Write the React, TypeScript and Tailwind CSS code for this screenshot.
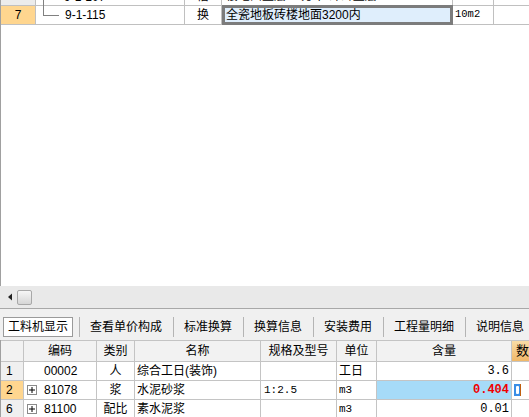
import React from "react";

const FONT = { fontFamily: '"Liberation Sans", "Noto Sans CJK SC", sans-serif' };
const MONO = { fontFamily: '"Liberation Mono", "Noto Sans CJK SC", monospace' };

const TABS = ["工料机显示", "查看单价构成", "标准换算", "换算信息", "安装费用", "工程量明细", "说明信息"];

function PlusBox() {
  return (
    <span className="w-[10px] h-[10px] border border-[#8a8a8a] bg-white flex items-center justify-center shrink-0">
      <svg width="8" height="8" viewBox="0 0 8 8">
        <path d="M1 4H7M4 1V7" stroke="#000" strokeWidth="1" />
      </svg>
    </span>
  );
}

function TopTable() {
  return (
    <div className="h-[286px] bg-white border-l border-[#a0a0a0] overflow-hidden">
      {/* partially scrolled-off row */}
      <div className="h-[5px] overflow-hidden flex items-end">
        <div className="flex h-[19px] w-full text-[12px] shrink-0">
          <div className="w-[35px] bg-[#ececec] border-r border-[#c0c0c0]" />
          <div className="w-[149px] border-r border-[#c0c0c0] relative">
            <div className="absolute left-[7px] top-0 bottom-0 border-l border-[#808080]" />
            <span className="absolute left-[28px] top-[2px]">9-1-107</span>
          </div>
          <div className="w-[37px] border-r border-[#c0c0c0] text-center pt-[1px]">借</div>
          <div className="w-[231px] border-r border-[#c0c0c0] pl-[4px] pt-[1px] whitespace-nowrap">楼地面垫层 土方平 碎砖垫层</div>
          <div className="w-[41px] border-r border-[#c0c0c0]" />
          <div className="flex-1" />
        </div>
      </div>
      {/* row 7 */}
      <div className="flex h-[20px] border-y border-[#c0c0c0] text-[12px]">
        <div className="w-[35px] bg-[#ffd68f] border-r border-[#c0c0c0] flex items-center justify-center">7</div>
        <div className="w-[149px] border-r border-[#c0c0c0] relative flex items-center">
          <div className="absolute left-[7px] top-[-6px] h-[16px] border-l border-[#808080]" />
          <div className="absolute left-[7px] top-[9px] w-[16px] border-t border-[#808080]" />
          <span className="pl-[29px]">9-1-115</span>
        </div>
        <div className="w-[37px] border-r border-[#c0c0c0] flex items-center justify-center">换</div>
        <div className="w-[231px] -my-[1px] h-[20px] border-[3px] border-[#7c7c7c] bg-[#dfeefc] flex items-center pl-[1px] whitespace-nowrap">
          全瓷地板砖楼地面3200内
        </div>
        <div className="w-[41px] border-r border-[#c0c0c0] flex items-center pl-[2px] text-[10.5px]" style={MONO}>
          10m2
        </div>
        <div className="flex-1" />
      </div>
    </div>
  );
}

function ScrollBar() {
  return (
    <div className="h-[23px] bg-[#e9e9e9] border-b border-[#a8a8a8] flex items-center pl-[7px] gap-[4px]">
      <svg width="6" height="8" viewBox="0 0 6 8">
        <path d="M1 4L5 0.5V7.5Z" fill="#222" />
      </svg>
      <div className="w-[15px] h-[15px] rounded-[2px] border border-[#a8a8a8] bg-gradient-to-b from-[#f6f6f6] to-[#d6d6d6]" />
    </div>
  );
}

function Tabs() {
  return (
    <div className="h-[31px] bg-[#f0f0f0] flex items-start pt-[8px] pl-[3px] text-[12px] whitespace-nowrap">
      {TABS.map((t, i) => (
        <React.Fragment key={t}>
          {i > 0 && (
            <div className={"w-px h-[20px] bg-[#b4b4b4] mr-[10px] shrink-0 " + (i === 1 ? "ml-[6px]" : "ml-[11px]")} />
          )}
          {i === 0 ? (
            <div className="h-[20px] border border-[#9a9a9a] bg-white px-[4px] flex items-center shrink-0">{t}</div>
          ) : (
            <div className="h-[20px] flex items-center shrink-0">{t}</div>
          )}
        </React.Fragment>
      ))}
    </div>
  );
}

const COLS = [23, 73, 38, 126, 76, 40, 135];

function Cell({
  w,
  className = "",
  children,
  style,
}: {
  w: number;
  className?: string;
  children?: React.ReactNode;
  style?: React.CSSProperties;
}) {
  return (
    <div className={"shrink-0 border-r border-[#c4c4c4] flex items-center whitespace-nowrap " + className} style={{ width: w, ...style }}>
      {children}
    </div>
  );
}

function LowerTable() {
  return (
    <div className="bg-white border-l border-[#a0a0a0] text-[12px]">
      <div className="flex h-[22px] border-y border-[#c4c4c4] bg-[#f2f2f2]">
        <Cell w={COLS[0]} />
        <Cell w={COLS[1]} className="justify-center">编码</Cell>
        <Cell w={COLS[2]} className="justify-center">类别</Cell>
        <Cell w={COLS[3]} className="justify-center">名称</Cell>
        <Cell w={COLS[4]} className="justify-center">规格及型号</Cell>
        <Cell w={COLS[5]} className="justify-center">单位</Cell>
        <Cell w={COLS[6]} className="justify-center">含量</Cell>
        <div className="flex-1 bg-gradient-to-b from-[#f9dca6] to-[#f0b868] flex items-center pl-[4px] overflow-hidden text-[13px]">数</div>
      </div>
      <div className="flex h-[19px] border-b border-[#c4c4c4]">
        <Cell w={COLS[0]} className="bg-[#f0f0f0] pl-[5px]">1</Cell>
        <Cell w={COLS[1]} className="pl-[20px]">00002</Cell>
        <Cell w={COLS[2]} className="justify-center">人</Cell>
        <Cell w={COLS[3]} className="pl-[2px]">综合工日(装饰)</Cell>
        <Cell w={COLS[4]} />
        <Cell w={COLS[5]} className="pl-[2px]">工日</Cell>
        <Cell w={COLS[6]} className="justify-end pr-[2px]" style={MONO}>3.6</Cell>
        <div className="flex-1" />
      </div>
      <div className="flex h-[19px] border-b border-[#c4c4c4]">
        <Cell w={COLS[0]} className="bg-[#ffd68f] pl-[5px]">2</Cell>
        <Cell w={COLS[1]} className="pl-[3px] gap-[7px]">
          <PlusBox />
          81078
        </Cell>
        <Cell w={COLS[2]} className="justify-center">浆</Cell>
        <Cell w={COLS[3]} className="pl-[2px]">水泥砂浆</Cell>
        <Cell w={COLS[4]} className="pl-[3px] text-[11px]" style={MONO}>1:2.5</Cell>
        <Cell w={COLS[5]} className="pl-[2px] text-[11px]" style={MONO}>m3</Cell>
        <Cell w={COLS[6]} className="justify-end pr-[2px] bg-[#a6dbf8] text-[#f00000] font-bold" style={MONO}>
          0.404
        </Cell>
        <div className="flex-1 flex items-center pl-[2px]">
          <span className="w-[6px] h-[12px] bg-[#3a8ee6] flex items-center justify-center">
            <span className="w-[3px] h-[8px] bg-white rounded-[1px]" />
          </span>
          <span className="w-px h-[12px] bg-[#c06010]" />
        </div>
      </div>
      <div className="flex h-[19px] border-b border-[#c4c4c4]">
        <Cell w={COLS[0]} className="bg-[#f0f0f0] pl-[5px]">6</Cell>
        <Cell w={COLS[1]} className="pl-[3px] gap-[7px]">
          <PlusBox />
          81100
        </Cell>
        <Cell w={COLS[2]} className="justify-center">配比</Cell>
        <Cell w={COLS[3]} className="pl-[2px]">素水泥浆</Cell>
        <Cell w={COLS[4]} />
        <Cell w={COLS[5]} className="pl-[2px] text-[11px]" style={MONO}>m3</Cell>
        <Cell w={COLS[6]} className="justify-end pr-[2px]" style={MONO}>0.01</Cell>
        <div className="flex-1" />
      </div>
    </div>
  );
}

export default function App() {
  return (
    <div className="w-[529px] h-[417px] overflow-hidden bg-[#f0f0f0] text-black" style={FONT}>
      <TopTable />
      <ScrollBar />
      <Tabs />
      <LowerTable />
    </div>
  );
}
